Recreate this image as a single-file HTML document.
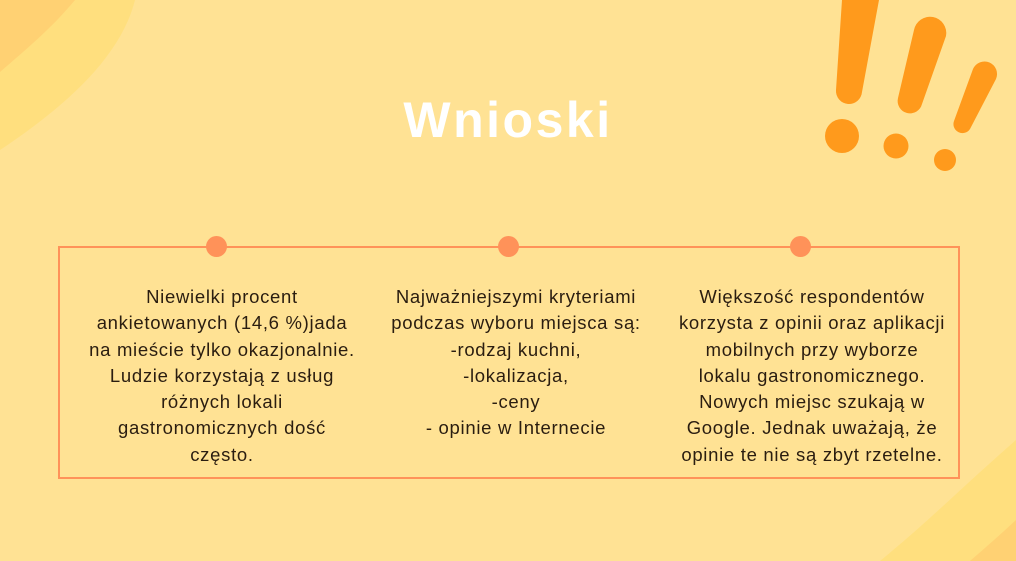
<!DOCTYPE html>
<html><head><meta charset="utf-8"><style>
html,body{margin:0;padding:0}
body{width:1016px;height:561px;background:#FFE294;position:relative;overflow:hidden;font-family:"Liberation Sans",sans-serif}
h1{position:absolute;left:0;width:1016px;top:91px;margin:0;text-align:center;color:#fff;font-size:50px;font-weight:bold;letter-spacing:2.5px}
.box{position:absolute;left:58px;top:246px;width:898px;height:229px;border:2px solid #FF9259}
.dot{position:absolute;top:236px;width:21px;height:21px;border-radius:50%;background:#FF9259}
.col{position:absolute;top:284px;text-align:center;font-size:18.5px;letter-spacing:0.7px;line-height:26.3px;color:#2a1d10;white-space:nowrap}
</style></head><body>
<svg width="1016" height="561" style="position:absolute;left:0;top:0">
<path d="M0 0 H135 C120 60 60 110 0 150 Z" fill="#FFDF7E"/>
<path d="M0 0 H75 C50 30 25 50 0 72 Z" fill="#FFD173"/>
<path d="M1016 440 C970 480 930 520 880 561 H1016 Z" fill="#FFDF7E"/>
<path d="M1016 520 C1000 535 985 548 970 561 H1016 Z" fill="#FFD173"/>
<g fill="#FF9A1C">
<path d="M842 0 L879 0 L862 92 A13 13 0 0 1 836 90 Z"/>
<path d="M914 30 A16 16 0 0 1 946 36 L922 104 A12 12 0 0 1 898 98 Z"/>
<path d="M973 69 A12 12 0 0 1 996 79 L970 129 A9 9 0 0 1 954 121 Z"/>
<circle cx="842" cy="136" r="17"/><circle cx="896" cy="146" r="12.5"/><circle cx="945" cy="160" r="11"/></g>
</svg>
<h1>Wnioski</h1>
<div class="box"></div>
<div class="dot" style="left:206px"></div>
<div class="dot" style="left:498px"></div>
<div class="dot" style="left:790px"></div>
<div class="col" style="left:72px;width:300px">Niewielki procent<br>ankietowanych (14,6 %)jada<br>na mieście tylko okazjonalnie.<br>Ludzie korzystają z usług<br>różnych lokali<br>gastronomicznych dość<br>często.</div>
<div class="col" style="left:366px;width:300px">Najważniejszymi kryteriami<br>podczas wyboru miejsca są:<br>-rodzaj kuchni,<br>-lokalizacja,<br>-ceny<br>- opinie w Internecie</div>
<div class="col" style="left:662px;width:300px">Większość respondentów<br>korzysta z opinii oraz aplikacji<br>mobilnych przy wyborze<br>lokalu gastronomicznego.<br>Nowych miejsc szukają w<br>Google. Jednak uważają, że<br>opinie te nie są zbyt rzetelne.</div>
</body></html>
